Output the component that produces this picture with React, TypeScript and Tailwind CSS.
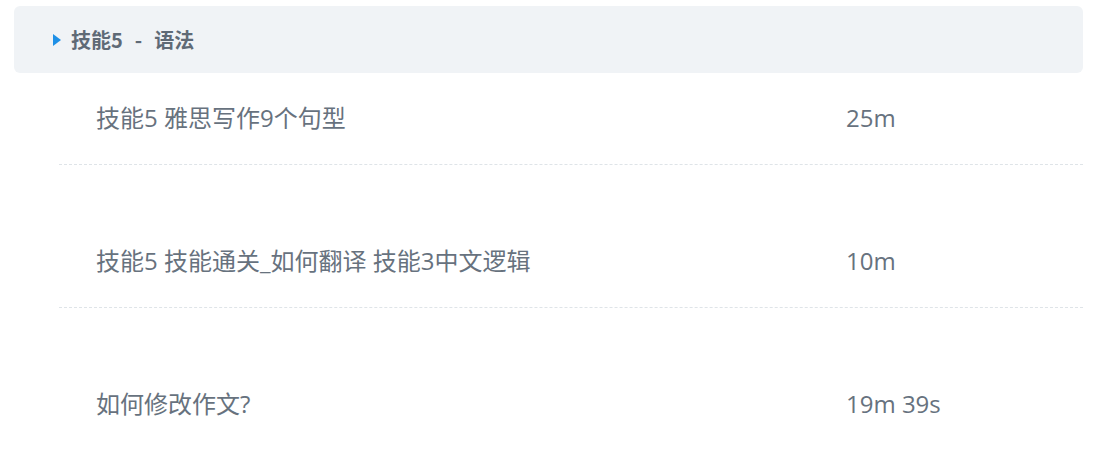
import React from "react";

const lessons = [
  { title: "技能5 雅思写作9个句型", time: "25m" },
  { title: "技能5 技能通关_如何翻译 技能3中文逻辑", time: "10m" },
  { title: "如何修改作文?", time: "19m 39s" },
];

const font = { fontFamily: '"Open Sans", "Noto Sans CJK SC", sans-serif' };

const App = () => {
  return (
    <div className="w-[1112px] h-[461px] bg-white pl-[14px] pr-[29px] pt-[6px] overflow-hidden" style={font}>
      <div className="h-[67px] rounded-md bg-[#f0f3f6] flex items-center pl-[39px] gap-[10px]">
        <svg width="8" height="12" viewBox="0 0 8 12" className="mt-[1px]">
          <path d="M0 0 L8 6 L0 12 Z" fill="#1e90e6" />
        </svg>
        <span
          className="text-[20px] font-bold text-[#5f6a76] flex items-center"
          style={{ fontFamily: '"Noto Sans CJK SC", "Open Sans", sans-serif' }}
        >
          技能5<span className="mx-[12px]">-</span>语法
        </span>
      </div>
      <div className="ml-[45px]">
        {lessons.map((l, i) => (
          <div
            key={l.title}
            className={`flex pl-[37px] text-[24px] leading-[32px] text-[#67727e] ${
              i === 0 ? "pt-[29px]" : "pt-[80px]"
            } ${i < lessons.length - 1 ? "pb-[30px] border-b border-dashed border-[#dfe4e8]" : ""}`}
          >
            <div className="w-[750px]">{l.title}</div>
            <div>{l.time}</div>
          </div>
        ))}
      </div>
    </div>
  );
};

export default App;
